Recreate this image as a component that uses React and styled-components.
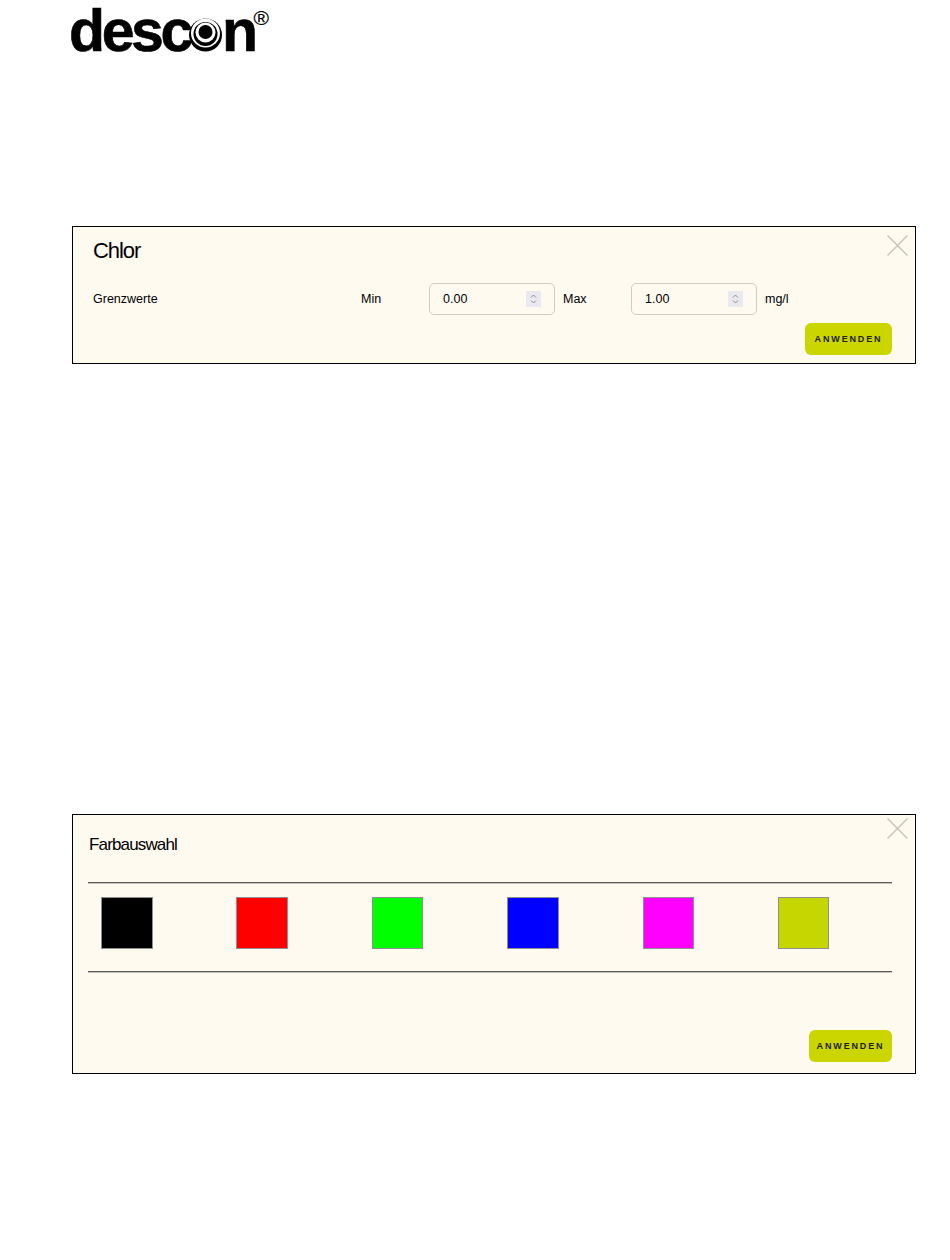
import React from 'react'
import styled, { createGlobalStyle } from 'styled-components'

const GlobalStyle = createGlobalStyle`
  html, body { margin: 0; padding: 0; background: #fff; }
  body { font-family: "Liberation Sans", Arial, sans-serif; color: #000; }
`

const Page = styled.div`
  width: 950px;
  height: 1260px;
  box-sizing: border-box;
  padding: 0 34px 0 72px;
`

const Logo = styled.div`
  box-sizing: border-box;
  height: 226px;
  padding-top: 1px;
  display: flex;
  align-items: flex-start;
  margin-left: -3px;
  font-weight: 700;
  font-size: 59px;
  line-height: 60px;
  letter-spacing: -3.4px;
  -webkit-text-stroke: 0.6px #000;
`

const LogoMark = styled.svg`
  width: 33px;
  height: 34px;
  margin: 17px 0 0 -1px;
  flex: none;
  position: relative;
`

const Registered = styled.span`
  font-size: 21px;
  font-weight: 400;
  line-height: 22px;
  letter-spacing: 0;
  -webkit-text-stroke: 0.2px #000;
  margin: 6px 0 0 -1px;
`

const Panel = styled.section`
  position: relative;
  box-sizing: border-box;
  height: ${props => props.height}px;
  margin-bottom: ${props => props.gap || 0}px;
  padding: ${props => props.pad};
  background: #fffaf0;
  border: 1px solid #000;
  display: flex;
  flex-direction: column;
`

const CloseButton = styled.svg`
  position: absolute;
  top: ${props => props.top}px;
  right: 7px;
  width: 21px;
  height: 21px;
`

const Title = styled.h2`
  margin: 0 0 0 ${props => props.indent || 0}px;
  font-weight: 400;
  font-size: ${props => props.size}px;
  line-height: 26px;
  letter-spacing: ${props => props.tracking}px;
`

const LimitRow = styled.div`
  display: flex;
  align-items: center;
  margin-top: 19px;
  font-size: 12.5px;
`

const Label = styled.span`
  flex: none;
  width: ${props => props.width}px;
`

const NumberBox = styled.div`
  flex: none;
  box-sizing: border-box;
  width: 126px;
  height: 32px;
  padding: 0 13px 0 13px;
  margin-right: 8px;
  display: flex;
  align-items: center;
  justify-content: space-between;
  background: #fffaf0;
  border: 1px solid #cfccc6;
  border-radius: 5px;
`

const NumberValue = styled.input`
  width: 60px;
  padding: 0;
  border: 0;
  outline: 0;
  background: transparent;
  font: 400 12.5px "Liberation Sans", Arial, sans-serif;
  color: #000;
`

const Spinner = styled.svg`
  width: 15px;
  height: 16px;
  background: #e9e9ef;
`

const Actions = styled.div`
  display: flex;
  justify-content: flex-end;
  margin-top: ${props => props.top}px;
`

const ApplyButton = styled.button`
  box-sizing: border-box;
  width: ${props => props.width}px;
  height: 32px;
  padding: 0;
  border: 0;
  border-radius: 6px;
  background: #cbd500;
  color: #222;
  font: 700 9px "Liberation Sans", Arial, sans-serif;
  letter-spacing: 1.85px;
`

const Rule = styled.hr`
  margin: ${props => props.top || 0}px 0 0;
  height: 0;
  border: 0;
  border-top: 1px solid #5c5c5c;
  border-bottom: 1px solid #c4c2bb;
`

const Swatches = styled.div`
  display: grid;
  grid-template-columns: repeat(6, 135.4px);
  padding: 13px 0 22px 13px;
`

const Swatch = styled.div`
  box-sizing: border-box;
  width: 51.5px;
  height: 52px;
  background: ${props => props.color};
  border: 1px solid #8f8f8f;
`

const Close = ({ top }) => (
  <CloseButton top={top} viewBox="0 0 21 21" fill="none" stroke="#c9c6bc" strokeWidth="1.5">
    <path d="M.5.5 20.5 20.5M20.5.5 .5 20.5" />
  </CloseButton>
)

const NumberField = ({ value }) => (
  <NumberBox>
    <NumberValue type="text" defaultValue={value} />
    <Spinner viewBox="0 0 15 16" fill="none" stroke="#8a8a90" strokeWidth="1">
      <path d="M5 6.5 7.5 4 10 6.5M5 9.5 7.5 12 10 9.5" />
    </Spinner>
  </NumberBox>
)

const COLORS = ['#000000', '#ff0000', '#00ff00', '#0000ff', '#ff00ff', '#c6d600']

export default function App() {
  return (
    <Page>
      <GlobalStyle />
      <Logo>
        desc
        <LogoMark viewBox="0 0 33 34">
          <circle cx="16.5" cy="17" r="16.5" fill="#000" />
          <circle cx="16.5" cy="15" r="14.5" fill="#fff" />
          <circle cx="16.5" cy="16" r="12" fill="#000" />
          <circle cx="16.5" cy="14.5" r="10" fill="#fff" />
          <circle cx="16.5" cy="14" r="7" fill="#000" />
        </LogoMark>
        n
        <Registered>®</Registered>
      </Logo>

      <Panel height={138} gap={450} pad="11px 23px 0 20px">
        <Close top={8} />
        <Title size={22} tracking={-1.05}>Chlor</Title>
        <LimitRow>
          <Label width={268}>Grenzwerte</Label>
          <Label width={68}>Min</Label>
          <NumberField value="0.00" />
          <Label width={68}>Max</Label>
          <NumberField value="1.00" />
          <Label width={40}>mg/l</Label>
        </LimitRow>
        <Actions top={8}>
          <ApplyButton width={87}>ANWENDEN</ApplyButton>
        </Actions>
      </Panel>

      <Panel height={260} pad="17px 23px 0 15px">
        <Close top={3} />
        <Title size={17} tracking={-0.85} indent={1}>Farbauswahl</Title>
        <Rule top={24} />
        <Swatches>
          {COLORS.map(color => <Swatch key={color} color={color} />)}
        </Swatches>
        <Rule />
        <Actions top={57}>
          <ApplyButton width={83}>ANWENDEN</ApplyButton>
        </Actions>
      </Panel>
    </Page>
  )
}
